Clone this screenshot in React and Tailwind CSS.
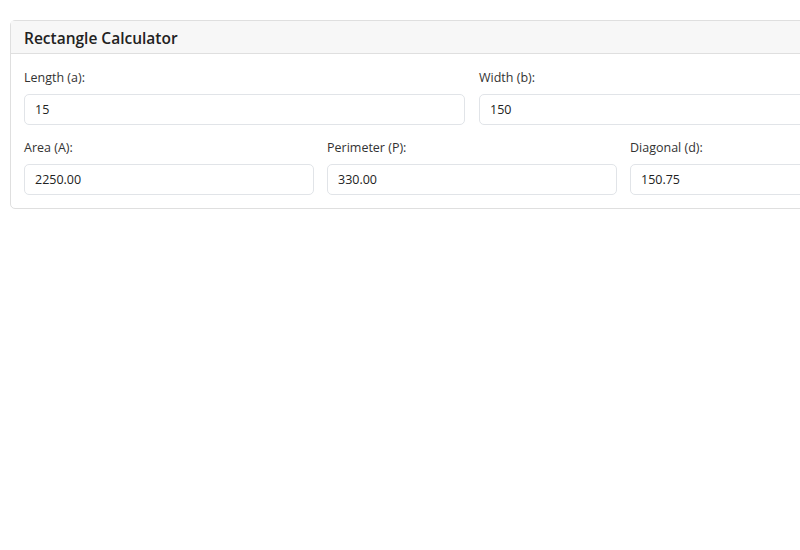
import { useState } from 'react';

function Field({ label, value, onChange, readOnly }) {
  return (
    <div className="flex flex-col">
      <label className="mb-[6px] text-[12.5px] leading-5 text-[#333]">{label}</label>
      <input
        value={value}
        readOnly={readOnly}
        onChange={onChange}
        className="h-[31px] rounded-[5px] border border-[#e1e4e8] bg-white px-[10px] text-[12.5px] text-[#222] outline-none"
      />
    </div>
  );
}

export default function App() {
  const [a, setA] = useState('15');
  const [b, setB] = useState('150');

  const la = parseFloat(a) || 0;
  const lb = parseFloat(b) || 0;
  const area = (la * lb).toFixed(2);
  const perimeter = (2 * (la + lb)).toFixed(2);
  const diagonal = Math.sqrt(la * la + lb * lb).toFixed(2);

  return (
    <div className="min-h-screen overflow-hidden bg-white pt-5 pl-[10px]" style={{ fontFamily: '"Open Sans", "Noto Sans", sans-serif' }}>
      <div className="w-[924px] rounded-[5px] border border-[#dfdfdf]">
        {/* Header */}
        <div className="flex h-[33px] items-center border-b border-[#dfdfdf] bg-[#f7f7f7] px-[13px] pt-[3px]">
          <h1 className="text-[15.5px] font-semibold text-[#222]">Rectangle Calculator</h1>
        </div>

        {/* Body */}
        <div className="flex flex-col gap-[13px] px-[13px] pt-[14px] pb-[13px]">
          <div className="grid grid-cols-2 gap-[14px]">
            <Field label="Length (a):" value={a} onChange={(e) => setA(e.target.value)} />
            <Field label="Width (b):" value={b} onChange={(e) => setB(e.target.value)} />
          </div>
          <div className="grid grid-cols-3 gap-[13px]">
            <Field label="Area (A):" value={area} readOnly />
            <Field label="Perimeter (P):" value={perimeter} readOnly />
            <Field label="Diagonal (d):" value={diagonal} readOnly />
          </div>
        </div>
      </div>
    </div>
  );
}
